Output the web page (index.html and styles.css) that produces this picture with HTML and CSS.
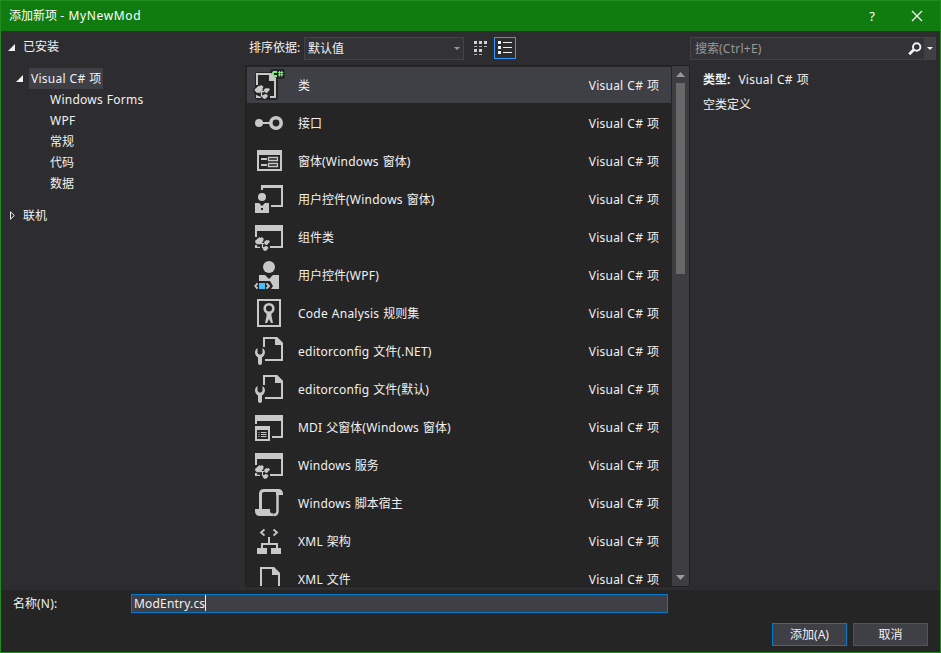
FILE: index.html
```html
<!DOCTYPE html>
<html lang="zh-CN">
<head>
<meta charset="utf-8">
<title>添加新项 - MyNewMod</title>
<link rel="stylesheet" href="styles.css">
</head>
<body>
<svg class="defs" width="0" height="0">
  <symbol id="i-class" viewBox="0 0 32 32">
    <path d="M5 19V6h12l5 5v17H5z" fill="#252526" stroke="#252526" stroke-width="6" stroke-linejoin="round"/>
    <rect x="17" y="0" width="15" height="10" rx="3" fill="#252526"/>
    <path d="M4 16V5h13.500L22 10v18h-5M4 25v3h4" fill="none" stroke="#c8c8c8" stroke-width="2"/>
    <path d="M16 4h2l5 5v3h-7z" fill="#c8c8c8"/>
    <path d="M0 20l7-6 5 4 5 1v7l-3 4-6-2-7-3z" fill="#252526"/>
    <path fill="#c8c8c8" d="M1.500 20.500l4.500-4 1 .5 1.500-1 2 2-1 1.500.5 1-3.500 3.500-1.500-.5-1 .5-2-2zM11 20.500l2-1.500 1 .5 1.500-.5 1.500 1.500-3 3.500-2-.5-1-1.500zM10 26.500l2-1.500 2 .5 1 1.500-2 2.500-2 .5-2-2z"/>
    <path d="M7 22.500h4M8.500 22.500v4.500h2.500" fill="none" stroke="#c8c8c8" stroke-width="1.300"/>
    <path d="M24 3h-3.300l-.7.800v2.500l.7.800H24" fill="none" stroke="#8be48b" stroke-width="2"/>
    <path d="M26.500 2v5.500M28.700 2v5.500M25 3.500h5.300M25 5.800h5.300" fill="none" stroke="#8be48b" stroke-width="1.100"/>
  </symbol>
  <symbol id="i-interface" viewBox="0 0 32 32">
    <circle cx="6" cy="16" r="4" fill="#c8c8c8"/><path d="M8 16h9" stroke="#c8c8c8" stroke-width="2"/>
    <circle cx="23" cy="16" r="5.200" fill="none" stroke="#c8c8c8" stroke-width="3.600"/>
  </symbol>
  <symbol id="i-form" viewBox="0 0 32 32">
    <path fill="#c8c8c8" fill-rule="evenodd" d="M4 5h25v21H4zM6 10v14h21V10z"/>
    <path d="M8 14h6M8 20h6" stroke="#c8c8c8" stroke-width="2"/>
    <path d="M15.500 12.500h9v3h-9zM15.500 18.500h9v3h-9z" fill="none" stroke="#c8c8c8" stroke-width="1.300"/>
  </symbol>
  <symbol id="i-user" viewBox="0 0 32 32">
    <path fill="#c8c8c8" d="M8 2h22v22H18v-2h10V5H10v2H8z"/>
    <circle cx="9" cy="14" r="4" fill="#c8c8c8"/>
    <path fill="#c8c8c8" fill-rule="evenodd" d="M2 20h4l3 3 3-3h4v10H2zM8 25v2h2v-2z"/>
  </symbol>
  <symbol id="i-component" viewBox="0 0 32 32">
    <path fill="#c8c8c8" d="M2 4h28v23H17v-2h11V10H4v6H2z"/>
    <path fill="#c8c8c8" d="M2 20l4.500-4 1 1 1.500-1 2 2-1 1 .5 1L7 23.500l-1.500-.5-1 .5L2.500 22zM11.500 20.500l2-1.500 1 .5 1-.5 1.500 1.500-3 3.500-2-.5-1-1.500zM10.500 26.500l2-1.500 2 .5 1 1.500-2 2.500-2 .5-2-2zM2 24h2v3H2z"/>
    <path d="M7 22.500h4M9.500 22.500v4H12M3 26.400h4" fill="none" stroke="#c8c8c8" stroke-width="1.200"/>
  </symbol>
  <symbol id="i-wpf" viewBox="0 0 32 32">
    <circle cx="16" cy="8" r="6" fill="#c8c8c8"/>
    <path fill="#c8c8c8" d="M6 16h6l4 4 4-4h6v14h-8l2-3-3-5H6z"/>
    <path d="M4.500 24.300L2.300 27l2.200 2.700M13.500 24.300l2.500 2.700-2.500 2.700" fill="none" stroke="#c8c8c8" stroke-width="1.900"/>
    <path fill="#3fc1ff" d="M6 24h6v6H6z"/>
  </symbol>
  <symbol id="i-rule" viewBox="0 0 32 32">
    <path d="M5 3h22v26H5z" fill="none" stroke="#c8c8c8" stroke-width="2"/>
    <circle cx="16" cy="11.500" r="4.300" fill="none" stroke="#c8c8c8" stroke-width="2.600"/>
    <path fill="#c8c8c8" d="M13.500 15h5v4l1.500 7h-2l-2-4-2 4h-2l1.500-7z"/>
  </symbol>
  <symbol id="i-config" viewBox="0 0 32 32">
    <path d="M11 12V3h12.500L29 8.500V25H12" fill="none" stroke="#c8c8c8" stroke-width="2"/>
    <path fill="#c8c8c8" d="M22 2h2l6 6v2h-8z"/>
    <path fill="#c8c8c8" d="M4.500 13v5l1.500 1.500h2L9.500 18v-5c3.500 2 3.200 7-.5 9.500V28q0 2-2 2t-2-2v-5.500C1.300 20 1 15 4.500 13z"/>
  </symbol>
  <symbol id="i-mdi" viewBox="0 0 32 32">
    <path fill="#c8c8c8" d="M2 4h28v23H19v-2h9V10H4v3H2z"/>
    <path fill="#c8c8c8" fill-rule="evenodd" d="M2 15h15v15H2zM4 19v9h11v-9z"/>
    <path d="M5.500 21.500h1M5.500 23.500h1M5.500 25.500h1M8 21.500h5.500M8 23.500h5.500M8 25.500h5.500" stroke="#c8c8c8"/>
  </symbol>
  <symbol id="i-script" viewBox="0 0 32 32">
    <path d="M7.500 23V7q0-3.500 3.500-3.500h15.500" fill="none" stroke="#c8c8c8" stroke-width="3"/>
    <path d="M24.500 7v17q0 4-4 4" fill="none" stroke="#c8c8c8" stroke-width="2.500"/>
    <path fill="#c8c8c8" d="M25 2q5 0 5 5v1h-7V5q0-3 2-3zM2 22h15v2q0 2.500 3.500 2.500V29H7q-5 0-5-5z"/>
  </symbol>
  <symbol id="i-schema" viewBox="0 0 32 32">
    <path d="M11.500 4.500L8 7.500l3.500 3M20.500 4.500l3.500 3-3.500 3" fill="none" stroke="#c8c8c8" stroke-width="1.800"/>
    <path d="M16 12v6.500M9 24v-5h15v5" fill="none" stroke="#c8c8c8" stroke-width="2"/>
    <path fill="#c8c8c8" d="M4 23h10v6H4zM18 23h10v6H18z"/>
  </symbol>
  <symbol id="i-xml" viewBox="0 0 32 32">
    <path d="M8 32V5h12l6 6v21" fill="none" stroke="#c8c8c8" stroke-width="2"/>
    <path fill="#c8c8c8" d="M19 4h2l6 6v2h-8z"/>
  </symbol>
</svg>
<div class="window">
  <header class="titlebar">
    <div class="caption">添加新项 <span class="title-en">- MyNewMod</span></div>
    <div class="help">?</div>
    <svg class="close" width="12" height="12" viewBox="0 0 12 12"><path d="M1 1l10 10M11 1L1 11" stroke="#fff" stroke-width="1.200"/></svg>
  </header>
  <main class="main">
    <nav class="tree">
      <div class="node installed"><svg width="7" height="7"><path d="M7 0v7H0z" fill="#f1f1f1"/></svg>已安装</div>
      <div class="node project"><svg width="7" height="7"><path d="M7 0v7H0z" fill="#f1f1f1"/></svg><span class="selected"><span class="en">Visual C# </span>项</span></div>
      <div class="leaf"><span class="en">Windows Forms</span></div>
      <div class="leaf"><span class="en">WPF</span></div>
      <div class="leaf">常规</div>
      <div class="leaf">代码</div>
      <div class="leaf">数据</div>
      <div class="node online"><svg width="7" height="9"><path d="M1.500 .8v7.400L5.300 4.500z" fill="none" stroke="#f1f1f1"/></svg>联机</div>
    </nav>
    <section class="center">
      <div class="toolbar">
        <span>排序依据:</span>
        <div class="combo"><span>默认值</span><svg width="7" height="4"><path d="M0 0h6L3 3z" fill="#999"/></svg></div>
        <svg class="tiles" width="14" height="14"><path fill="#d0d0d0" d="M0 0h3v3H0zM5 0h3v3H5zM10 0h3v3h-3zM0 8h3v3H0zM5 8h3v3H5z"/><path stroke="#b0b0b0" d="M0 5.500h3M5 5.500h3M10 5.500h3M0 13.500h3M5 13.500h3"/></svg>
        <div class="view"><svg width="14" height="14"><path fill="#f1f1f1" d="M0 0h3v3H0zM0 5h3v3H0zM0 10h3v3H0zM5 1h9v1H5zM5 6h9v1H5zM5 11h9v1H5z"/></svg></div>
      </div>
      <div class="listbox">
        <div class="rows">
          <div class="row active"><svg class="icon"><use href="#i-class"/></svg><span class="name">类</span><span class="lang"><span class="en">Visual C# </span>项</span></div>
          <div class="row"><svg class="icon"><use href="#i-interface"/></svg><span class="name">接口</span><span class="lang"><span class="en">Visual C# </span>项</span></div>
          <div class="row"><svg class="icon"><use href="#i-form"/></svg><span class="name">窗体<span class="en">(Windows </span>窗体<span class="en">)</span></span><span class="lang"><span class="en">Visual C# </span>项</span></div>
          <div class="row"><svg class="icon"><use href="#i-user"/></svg><span class="name">用户控件<span class="en">(Windows </span>窗体<span class="en">)</span></span><span class="lang"><span class="en">Visual C# </span>项</span></div>
          <div class="row"><svg class="icon"><use href="#i-component"/></svg><span class="name">组件类</span><span class="lang"><span class="en">Visual C# </span>项</span></div>
          <div class="row"><svg class="icon"><use href="#i-wpf"/></svg><span class="name">用户控件<span class="en">(WPF)</span></span><span class="lang"><span class="en">Visual C# </span>项</span></div>
          <div class="row"><svg class="icon"><use href="#i-rule"/></svg><span class="name"><span class="en">Code Analysis </span>规则集</span><span class="lang"><span class="en">Visual C# </span>项</span></div>
          <div class="row"><svg class="icon"><use href="#i-config"/></svg><span class="name"><span class="en">editorconfig </span>文件<span class="en">(.NET)</span></span><span class="lang"><span class="en">Visual C# </span>项</span></div>
          <div class="row"><svg class="icon"><use href="#i-config"/></svg><span class="name"><span class="en">editorconfig </span>文件<span class="en">(</span>默认<span class="en">)</span></span><span class="lang"><span class="en">Visual C# </span>项</span></div>
          <div class="row"><svg class="icon"><use href="#i-mdi"/></svg><span class="name"><span class="en">MDI </span>父窗体<span class="en">(Windows </span>窗体<span class="en">)</span></span><span class="lang"><span class="en">Visual C# </span>项</span></div>
          <div class="row"><svg class="icon"><use href="#i-component"/></svg><span class="name"><span class="en">Windows </span>服务</span><span class="lang"><span class="en">Visual C# </span>项</span></div>
          <div class="row"><svg class="icon"><use href="#i-script"/></svg><span class="name"><span class="en">Windows </span>脚本宿主</span><span class="lang"><span class="en">Visual C# </span>项</span></div>
          <div class="row"><svg class="icon"><use href="#i-schema"/></svg><span class="name"><span class="en">XML </span>架构</span><span class="lang"><span class="en">Visual C# </span>项</span></div>
          <div class="row"><svg class="icon"><use href="#i-xml"/></svg><span class="name"><span class="en">XML </span>文件</span><span class="lang"><span class="en">Visual C# </span>项</span></div>
        </div>
        <div class="scrollbar">
          <svg width="9" height="5"><path d="M0 5h9L4.500 0z" fill="#999"/></svg>
          <div class="thumb"></div>
          <svg width="9" height="5"><path d="M0 0h9L4.500 5z" fill="#999"/></svg>
        </div>
      </div>
    </section>
    <aside class="details">
      <div class="search"><span class="placeholder">搜索<span class="en">(Ctrl+E)</span></span>
        <svg class="magnifier" width="14" height="14"><circle cx="8.700" cy="5" r="3.700" fill="none" stroke="#f1f1f1" stroke-width="2"/><path d="M6 7.500L1.200 12.300" stroke="#f1f1f1" stroke-width="2.800"/></svg>
        <div class="search-drop"><svg width="6" height="3"><path d="M0 0h6L3 3z" fill="#f1f1f1"/></svg></div>
      </div>
      <div class="kind"><b>类型:</b><span><span class="en">Visual C# </span>项</span></div>
      <div class="description">空类定义</div>
    </aside>
  </main>
  <footer class="footer">
    <div class="name-row"><label>名称<span class="en">(N):</span></label><div class="input"><span>ModEntry.cs</span><i class="caret"></i></div></div>
    <div class="actions"><div class="button primary">添加(A)</div><div class="button">取消</div></div>
  </footer>
</div>
</body>
</html>
```
FILE: styles.css
```css
* { box-sizing: border-box; }
body {
  margin: 0;
  font: 12px/18px "Noto Sans", "Noto Sans CJK SC", sans-serif;
  color: #f1f1f1;
  background: #2d2d30;
}
svg { display: block; flex: none; }
.defs { position: absolute; }
.en { letter-spacing: .24px; word-spacing: .5px; white-space: pre; }
.window {
  width: 941px;
  height: 653px;
  border: 1px solid #218a21;
  display: flex;
  flex-direction: column;
  overflow: hidden;
  white-space: nowrap;
}
.titlebar {
  height: 30px;
  flex: none;
  background: #107c10;
  color: #fff;
  display: flex;
  align-items: center;
  padding: 0 17px 0 8px;
}
.title-en { letter-spacing: .65px; }
.help { margin-left: auto; margin-right: 36px; font-size: 13px; }
.main { height: 559px; flex: none; display: flex; }
.tree { width: 244px; padding-top: 6px; }
.node { display: flex; align-items: center; }
.installed { height: 20px; gap: 8px; padding-left: 7px; }
.project { height: 21px; margin-top: 11px; padding-left: 15px; gap: 6px; }
.selected { background: #3f3f46; height: 21px; line-height: 21px; padding: 0 2px; width: 74px; }
.leaf { height: 21px; line-height: 21px; padding-left: 49px; }
.online { height: 21px; margin-top: 11px; padding-left: 8px; gap: 7px; }
.center { width: 445px; }
.toolbar { height: 34px; display: flex; padding: 6px 0 0 4px; line-height: 22px; }
.combo {
  width: 160px;
  height: 23px;
  margin-left: 3px;
  border: 1px solid #434346;
  background: #333337;
  display: flex;
  align-items: center;
  justify-content: space-between;
  padding: 0 2px 0 3px;
}
.toolbar > span { width: 52px; }
.tiles { margin: 4px 6px 0 10px; }
.view { width: 22px; height: 22px; border: 1px solid #3399ff; padding: 3px; }
.listbox {
  height: 522px;
  border: 1px solid #222224;
  background: #252526;
  display: flex;
}
.rows { width: 426px; padding: 1px 1px 0; overflow: hidden; }
.row {
  height: 36px;
  margin-bottom: 2px;
  display: flex;
  align-items: center;
  padding: 0 12px 0 6px;
}
.active { background: #3f3f46; }
.icon { width: 32px; height: 32px; }
.name { margin-left: 13px; flex: 1; }
.name, .lang { padding-top: 2px; }
.scrollbar {
  width: 17px;
  background: #3e3e42;
  display: flex;
  flex-direction: column;
  align-items: center;
  padding: 6px 0 6px;
}
.thumb { width: 9px; height: 191px; margin-top: 6px; margin-bottom: auto; background: #686868; }
.details { flex: 1; padding: 6px 4px 0 0; }
.search {
  height: 23px;
  border: 1px solid #434346;
  background: #333337;
  display: flex;
  align-items: center;
  padding-left: 4px;
}
.placeholder { color: #999; flex: 1; }
.magnifier { margin-right: 2px; }
.search-drop {
  width: 11px;
  height: 21px;
  background: #3f3f46;
  display: flex;
  align-items: center;
  justify-content: center;
}
.kind { display: flex; gap: 8px; margin: 11px 0 0 13px; }
.description { margin: 7px 0 0 13px; }
.footer { flex: 1; background: #252526; padding-top: 4px; }
.name-row { display: flex; }
.name-row label { width: 130px; padding: 1px 0 0 12px; }
.input {
  width: 537px;
  height: 19px;
  line-height: 17px;
  border: 1px solid #007acc;
  background: #3f3f46;
  padding-left: 2px;
  display: flex;
}
.input span { letter-spacing: .18px; }
.caret { width: 1px; height: 16px; background: #f1f1f1; }
.actions { display: flex; justify-content: flex-end; gap: 6px; margin-top: 10px; padding-right: 12px; }
.button {
  width: 75px;
  height: 23px;
  line-height: 21px;
  text-align: center;
  border: 1px solid #555558;
  background: #3f3f46;
}
.primary { border-color: #007acc; }
```
